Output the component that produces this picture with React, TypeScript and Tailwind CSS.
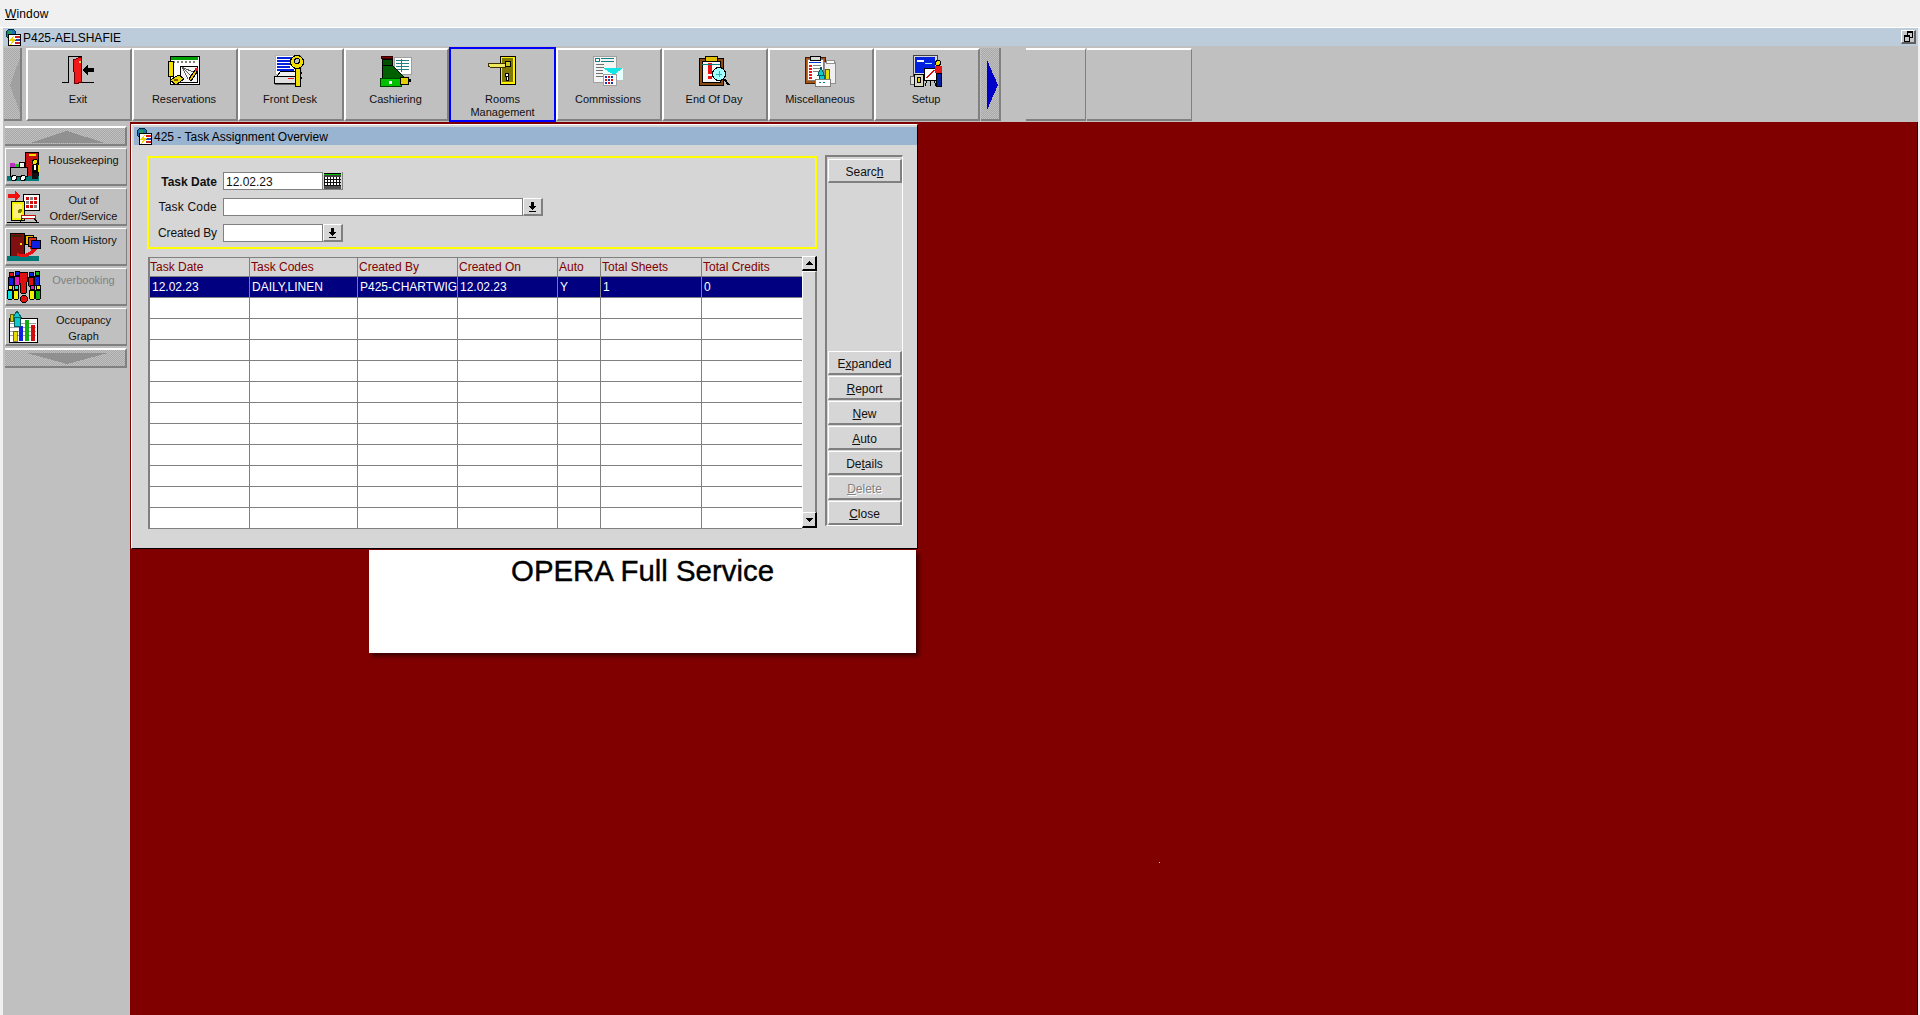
import React from "react";

const Ico = ({ w = 32, h = 32, children }: { w?: number; h?: number; children: React.ReactNode }) => (
  <svg width={w} height={h} viewBox={`0 0 ${w} ${h}`} shapeRendering="crispEdges" className="shrink-0">
    {children}
  </svg>
);

const AppGlobe = () => (
  <Ico w={16} h={17}>
    <circle cx="6" cy="5" r="5" fill="#1c6fb0" stroke="#003040" />
    <rect x="3" y="2" width="4" height="3" fill="#1f9a5a" />
    <rect x="3.5" y="5.5" width="12" height="11" fill="#fff" stroke="#000" />
    <rect x="10" y="7" width="5" height="2" fill="#d02020" />
    <rect x="10" y="10" width="5" height="2" fill="#2040c0" />
    <rect x="10" y="13" width="5" height="2" fill="#d02020" />
    <polygon points="9,6 4,12 7,12 5,16 11,10 8,10" fill="#f0d000" />
  </Ico>
);

const ExitIcon = () => (
  <Ico>
    <path d="M0 27.5H6.5V1.5H20M20 27.5H32" fill="none" stroke="#000" />
    <polygon points="11,5 19,2 20,27 13,29" fill="#f01818" stroke="#600" />
    <rect x="17" y="6" width="2" height="2" fill="#f0e040" />
    <polygon points="20,15 26,10 26,13 32,13 32,17 26,17 26,20" fill="#000" />
  </Ico>
);

const ReservationsIcon = () => (
  <Ico>
    <rect x="2" y="1" width="29" height="28" fill="#fff" stroke="#000" />
    <rect x="3" y="2" width="27" height="3" fill="#00a000" />
    {[5, 9, 13, 17, 21, 25].map((x) => (
      <rect key={x} x={x} y="6" width="2" height="2" fill="#808080" />
    ))}
    <rect x="12" y="11" width="17" height="16" fill="#f4f4f4" stroke="#000" />
    <path d="M14 12L25 23M14 12L20 24M14 12L27 18" stroke="#606060" fill="none" />
    <rect x="0" y="6" width="5" height="15" fill="#f0e000" stroke="#000" />
    <polygon points="2,25 11,20 16,24 8,30" fill="#e8d800" stroke="#000" />
    <rect x="6" y="24" width="4" height="2" fill="#806000" />
    <polygon points="21,24 27,15 29,17 23,26" fill="#f0c000" stroke="#000" />
    <rect x="27" y="13" width="3" height="3" fill="#f01010" />
  </Ico>
);

const FrontDeskIcon = () => (
  <Ico>
    <rect x="1" y="0" width="26" height="19" fill="#fff" stroke="#b0b0b0" />
    {[2, 5, 8, 11, 14].map((y, i) => (
      <rect key={y} x="3" y={y} width={i % 2 ? 13 : 17} height="2" fill="#0020e0" />
    ))}
    <rect x="20" y="2" width="5" height="2" fill="#a0a0a0" />
    <polygon points="3,21 7,16 22,16 24,21" fill="#f0f0f0" stroke="#000" />
    <rect x="0" y="21" width="25" height="7" fill="#e0e0e0" stroke="#000" />
    <rect x="14" y="23" width="6" height="1" fill="#f01010" />
    <rect x="1" y="29" width="24" height="1" fill="#606060" />
    <circle cx="23" cy="7" r="6.5" fill="#f0e000" stroke="#000" />
    <circle cx="23" cy="6" r="2.5" fill="#c0c0c0" stroke="#000" />
    <rect x="21" y="13" width="5" height="18" fill="#f0e000" stroke="#000" />
    <rect x="26" y="17" width="2" height="2" fill="#000" />
    <rect x="26" y="22" width="2" height="2" fill="#000" />
  </Ico>
);

const CashieringIcon = () => (
  <Ico>
    <rect x="1" y="1" width="11" height="2" fill="#800000" stroke="#300" />
    <rect x="2" y="4" width="10" height="7" fill="#005000" stroke="#000" />
    <rect x="14" y="2" width="17" height="17" fill="#fff" stroke="#a0a0a0" />
    {[5, 8, 11, 14].map((y) => (
      <rect key={y} x="16" y={y} width="13" height="1" fill="#208080" />
    ))}
    <rect x="21" y="4" width="1" height="13" fill="#208080" />
    <polygon points="2,10 12,10 23,21 23,24 2,24" fill="#006000" stroke="#000" />
    <rect x="0" y="23" width="21" height="8" fill="#00c000" stroke="#004000" />
    <rect x="9" y="26" width="3" height="3" fill="#fff" />
    <rect x="20" y="22" width="8" height="7" fill="#e0d000" stroke="#000" />
    <rect x="28" y="24" width="3" height="3" fill="#000" />
  </Ico>
);

const RoomsIcon = () => (
  <Ico>
    <rect x="13" y="1" width="15" height="28" fill="#fff000" stroke="#000" />
    <rect x="15" y="3" width="11" height="24" fill="#807800" />
    <rect x="1" y="8" width="20" height="4" rx="2" fill="#f0e860" stroke="#403000" />
    <circle cx="21" cy="9" r="3" fill="#d0c820" stroke="#000" />
    <circle cx="20" cy="20" r="2" fill="#fff" stroke="#000" />
    <rect x="19" y="21" width="2" height="4" fill="#fff" stroke="#000" />
  </Ico>
);

const CommissionsIcon = () => (
  <Ico>
    <rect x="1" y="1" width="23" height="26" fill="#f4f4f4" stroke="#a0a0a0" />
    <rect x="3" y="3" width="4" height="3" fill="#fff" stroke="#108080" />
    <rect x="9" y="3" width="13" height="1" fill="#108080" />
    <rect x="9" y="6" width="13" height="1" fill="#108080" />
    {[9, 12, 15, 18, 21].map((y) => (
      <rect key={y} x="4" y={y} width="8" height="1" fill="#707070" />
    ))}
    <polygon points="11,13 31,13 31,25 11,25" fill="#e8ffff" />
    <polygon points="11,13 31,13 22,20" fill="#10e8e8" />
    <rect x="11" y="19" width="13" height="11" fill="#fff" stroke="#a0a0a0" />
    {[13, 16, 19].map((x) =>
      [21, 24, 27].map((y) => (
        <rect key={`${x}-${y}`} x={x} y={y} width="2" height="2" fill={(x + y) % 2 ? "#e01010" : "#1030d0"} />
      ))
    )}
  </Ico>
);

const EndOfDayIcon = () => (
  <Ico>
    <rect x="1" y="3" width="24" height="27" fill="#8a4a10" stroke="#000" />
    <rect x="4" y="6" width="18" height="21" fill="#f4f4f4" stroke="#000" />
    <rect x="7" y="1" width="12" height="5" fill="#e0c000" stroke="#000" />
    <rect x="10" y="8" width="4" height="11" fill="#f01010" />
    <rect x="10" y="21" width="4" height="3" fill="#f01010" />
    <rect x="4" y="9" width="18" height="1" fill="#008080" />
    <circle cx="21" cy="19" r="6.5" fill="#a0ffff" stroke="#000" />
    <path d="M18 19H24M21 16V22" stroke="#30b0b0" />
    <path d="M26 24L31 30" stroke="#000" strokeWidth="2" />
  </Ico>
);

const MiscIcon = () => (
  <Ico>
    <rect x="1" y="2" width="20" height="26" fill="#a85010" stroke="#402000" />
    <rect x="3" y="4" width="16" height="21" fill="#fff" stroke="#808080" />
    <rect x="6" y="1" width="10" height="4" fill="#d8d8d8" stroke="#000" />
    <rect x="5" y="7" width="12" height="1" fill="#0030d0" />
    {[10, 13, 16, 19, 22].map((y) => (
      <rect key={y} x="5" y={y} width="3" height="2" fill="#f01010" />
    ))}
    {[10, 13, 16].map((y) => (
      <rect key={y} x="9" y={y} width="8" height="1" fill="#808080" />
    ))}
    <rect x="20" y="7" width="11" height="21" fill="#f0f0f0" stroke="#909090" />
    <rect x="22" y="5" width="8" height="3" fill="#fff" stroke="#909090" />
    <polygon points="14,20 17,12 20,20" fill="#10c8d0" stroke="#006060" />
    <rect x="15" y="20" width="5" height="5" fill="#10c8d0" stroke="#006060" />
    <rect x="21" y="14" width="4" height="10" fill="#e0e000" stroke="#606000" />
    <rect x="11" y="24" width="15" height="7" fill="#fff" stroke="#808080" />
    <path d="M15 27H17M19 27H21" stroke="#008080" />
  </Ico>
);

const SetupIcon = () => (
  <Ico>
    <rect x="3" y="0" width="24" height="22" fill="#d8d8d8" stroke="#404040" />
    <rect x="5" y="2" width="20" height="16" fill="#0020e0" />
    <rect x="7" y="5" width="7" height="2" fill="#fff" />
    <rect x="15" y="8" width="7" height="1" fill="#a0e0ff" />
    <rect x="0" y="21" width="4" height="8" fill="#e0e0e0" stroke="#606060" />
    <rect x="4" y="19" width="9" height="12" fill="#d8d8c0" stroke="#000" />
    <rect x="7" y="22" width="3" height="5" fill="#f0d000" stroke="#000" />
    <rect x="14" y="13" width="12" height="12" fill="#fff" stroke="#000" />
    <path d="M17 23L24 15" stroke="#d01010" strokeWidth="1.5" />
    <path d="M17 25L15 31M20 25V31M24 25L26 31" stroke="#000" />
    <circle cx="28" cy="8" r="2.5" fill="#f0e000" stroke="#000" />
    <rect x="25" y="11" width="7" height="7" fill="#e01818" />
    <rect x="26" y="18" width="5" height="13" fill="#0020a0" stroke="#000" />
  </Ico>
);

const HousekeepingIcon = () => (
  <Ico w={34}>
    <rect x="18" y="1" width="13" height="24" fill="#c81010" stroke="#000" />
    <rect x="22" y="3" width="7" height="2" fill="#f0e000" />
    <rect x="0" y="25" width="32" height="5" fill="#007878" />
    <rect x="3" y="16" width="17" height="9" fill="#a8a8a8" stroke="#000" />
    <rect x="3" y="12" width="5" height="4" fill="#c030c0" />
    <rect x="8" y="13" width="4" height="3" fill="#20c020" />
    <rect x="12" y="11" width="5" height="5" fill="#f0f0f0" stroke="#000" />
    <circle cx="7" cy="27" r="2.5" fill="#fff" stroke="#000" />
    <circle cx="16" cy="27" r="2.5" fill="#fff" stroke="#000" />
    <circle cx="28" cy="11" r="2.5" fill="#f0e000" stroke="#000" />
    <rect x="25" y="14" width="6" height="8" fill="#000" />
    <rect x="31" y="14" width="2" height="7" fill="#f0e000" />
    <rect x="27" y="14" width="2" height="5" fill="#fff" />
    <rect x="25" y="22" width="6" height="6" fill="#101010" />
  </Ico>
);

const OutOfOrderIcon = () => (
  <Ico w={34} h={34}>
    <rect x="16" y="4" width="16" height="16" fill="#fff" stroke="#000" />
    {[19, 23, 27].map((x) =>
      [7, 11, 15].map((y) => (
        <rect key={`${x}-${y}`} x={x} y={y} width="3" height="3" fill={(x + y) % 3 ? "#d01010" : "#808080"} />
      ))
    )}
    <polygon points="1,4 8,4 8,1 14,6 8,11 8,8 1,8" fill="#f01010" />
    <rect x="4" y="11" width="13" height="19" fill="#f0f000" stroke="#000" />
    <rect x="6" y="14" width="9" height="14" fill="#fff080" />
    <circle cx="13" cy="21" r="2" fill="#808000" />
    <rect x="14" y="25" width="14" height="3" fill="#fff" stroke="#c01010" />
    <path d="M16 28L13 32M27 28L30 32M0 32.5H32" stroke="#000" fill="none" />
  </Ico>
);

const RoomHistoryIcon = () => (
  <Ico w={34}>
    <rect x="3" y="2" width="14" height="23" fill="#801010" stroke="#000" />
    <rect x="5" y="4" width="10" height="2" fill="#402000" />
    <rect x="13" y="12" width="2" height="2" fill="#f0e000" />
    <rect x="0" y="25" width="32" height="5" fill="#007878" />
    <path d="M10 23Q17 28 26 20" stroke="#e81010" strokeWidth="3" fill="none" />
    <polygon points="23,16 30,18 25,24" fill="#e81010" />
    <rect x="18" y="4" width="8" height="9" fill="#f0c000" stroke="#000" />
    <rect x="21" y="6" width="8" height="9" fill="#e03020" stroke="#000" />
    <rect x="24" y="9" width="9" height="8" fill="#1020e0" stroke="#000" />
  </Ico>
);

const Person = ({ x, y, c, head }: { x: number; y: number; c: string; head: string }) => (
  <g>
    <rect x={x + 1} y={y} width="4" height="4" fill={head} stroke="#000" />
    <polygon points={`${x},${y + 5} ${x + 6},${y + 5} ${x + 5},${y + 14} ${x + 1},${y + 14}`} fill={c} stroke="#000" />
  </g>
);

const OverbookingIcon = () => (
  <Ico w={34} h={34}>
    <Person x={1} y={2} c="#1020e0" head="#e01010" />
    <Person x={7} y={1} c="#e020c0" head="#1020e0" />
    <Person x={21} y={2} c="#e01010" head="#1020e0" />
    <Person x={27} y={1} c="#1020e0" head="#10b010" />
    <Person x={0} y={15} c="#10e0e0" head="#f0f000" />
    <Person x={6} y={15} c="#f0f000" head="#10e0e0" />
    <Person x={22} y={15} c="#f0f000" head="#e020c0" />
    <Person x={28} y={15} c="#10b010" head="#f0f000" />
    <polygon points="12,2 21,2 19,23 14,23" fill="#e01010" stroke="#000" />
    <circle cx="17" cy="29" r="3.5" fill="#e01010" stroke="#000" />
  </Ico>
);

const OccupancyIcon = () => (
  <Ico w={34} h={32}>
    <rect x="2" y="7" width="28" height="24" fill="#fff" stroke="#000" />
    {[12, 16, 20, 24].map((y) => (
      <rect key={y} x="3" y={y} width="26" height="1" fill="#a0a0a0" />
    ))}
    <rect x="6" y="20" width="4" height="10" fill="#e8d800" stroke="#000" strokeWidth="0.5" />
    <rect x="12" y="15" width="4" height="15" fill="#1020e0" />
    <rect x="18" y="9" width="4" height="21" fill="#10b010" />
    <rect x="24" y="14" width="4" height="16" fill="#d01010" />
    <polygon points="10,0 14,6 6,6" fill="#10c8d0" stroke="#006060" />
    <rect x="7" y="6" width="6" height="9" fill="#10c8d0" stroke="#006060" />
    <rect x="3" y="3" width="3" height="7" fill="#d0d000" stroke="#606000" />
  </Ico>
);

const Dither = ({ id }: { id: string }) => (
  <defs>
    <pattern id={id} width="2" height="2" patternUnits="userSpaceOnUse">
      <rect width="2" height="2" fill="#c0c0c0" />
      <rect width="1" height="1" fill="#a8a8a8" />
      <rect x="1" y="1" width="1" height="1" fill="#a8a8a8" />
    </pattern>
  </defs>
);

const toolbarItems = [
  { label: "Exit", icon: <ExitIcon />, width: "w-[106px]" },
  { label: "Reservations", icon: <ReservationsIcon />, width: "w-[106px]" },
  { label: "Front Desk", icon: <FrontDeskIcon />, width: "w-[106px]" },
  { label: "Cashiering", icon: <CashieringIcon />, width: "w-[105px]" },
  { label: "Rooms\nManagement", icon: <RoomsIcon />, width: "w-[107px]", selected: true },
  { label: "Commissions", icon: <CommissionsIcon />, width: "w-[106px]" },
  { label: "End Of Day", icon: <EndOfDayIcon />, width: "w-[106px]" },
  { label: "Miscellaneous", icon: <MiscIcon />, width: "w-[106px]" },
  { label: "Setup", icon: <SetupIcon />, width: "w-[106px]" },
];

const sideItems = [
  { label: "Housekeeping", icon: <HousekeepingIcon /> },
  { label: "Out of\nOrder/Service", icon: <OutOfOrderIcon /> },
  { label: "Room History", icon: <RoomHistoryIcon /> },
  { label: "Overbooking", icon: <OverbookingIcon />, disabled: true },
  { label: "Occupancy\nGraph", icon: <OccupancyIcon /> },
];

const Toolbar = () => (
  <div className="flex h-[76px] items-start bg-[#c0c0c0] pt-[2px] pl-[1px]">
    <div className="h-[73px] w-[18px] border-r-2 border-b-2 border-[#808080]">
      <svg width="16" height="71" shapeRendering="crispEdges">
        <Dither id="ditherLeft" />
        <rect width="16" height="71" fill="url(#ditherLeft)" />
        <polygon points="6,37 16,10 16,65" fill="#a0a0a0" />
      </svg>
    </div>
    <div className="ml-[4px] flex">
      {toolbarItems.map((item) => (
        <div
          key={item.label}
          className={
            item.selected
              ? `${item.width} flex h-[75px] -mt-[1px] flex-col items-center border-2 border-[#0000ff] pt-[6px]`
              : `${item.width} flex h-[73px] flex-col items-center border-t-2 border-l-2 border-r-2 border-b-2 border-t-white border-l-white border-r-[#808080] border-b-[#808080] pt-[5px] pr-[2px]`
          }
        >
          {item.icon}
          <div className="mt-[6px] whitespace-pre-line text-center text-[11px] leading-[13px] text-[#101010]">{item.label}</div>
        </div>
      ))}
    </div>
    <div className="ml-[1px] h-[73px] w-[20px] border-r-2 border-b-2 border-[#808080]">
      <svg width="18" height="71" shapeRendering="crispEdges">
        <Dither id="ditherRight" />
        <rect width="18" height="71" fill="url(#ditherRight)" />
        <polygon points="6,12 17,37 6,62" fill="#0000c8" />
      </svg>
    </div>
    <div className="ml-[25px] h-[73px] w-[60px] border-t-2 border-r border-b-2 border-t-white border-r-[#808080] border-b-[#808080]" />
    <div className="ml-[1px] h-[73px] w-[105px] border-t-2 border-r border-b-2 border-t-white border-r-[#808080] border-b-[#808080]" />
  </div>
);

const Sidebar = () => (
  <div className="flex w-[127px] flex-col bg-[#c0c0c0] pt-[4px] pl-[2px]">
    <div className="h-[20px] w-[122px] border-t-2 border-r-2 border-b-2 border-t-white border-r-[#808080] border-b-[#808080]">
      <svg width="120" height="16" shapeRendering="crispEdges">
        <Dither id="ditherUp" />
        <rect width="120" height="16" fill="url(#ditherUp)" />
        <polygon points="62,3 100,15 25,15" fill="#909090" />
      </svg>
    </div>
    <div className="mt-[2px] flex flex-col gap-[2px]">
      {sideItems.map((item) => (
        <div
          key={item.label}
          className="flex h-[38px] w-[122px] items-center border-t border-r border-b-2 border-l border-t-white border-r-[#808080] border-b-[#808080] border-l-white pl-[1px]"
        >
          {item.icon}
          <div
            className={`flex-1 self-start pt-[3px] text-center whitespace-pre-line text-[11px] leading-[16px] ${
              item.disabled ? "text-[#808080]" : "text-[#101010]"
            }`}
          >
            {item.label}
          </div>
        </div>
      ))}
    </div>
    <div className="mt-[2px] h-[20px] w-[122px] border-t-2 border-r-2 border-b-2 border-t-white border-r-[#808080] border-b-[#808080]">
      <svg width="120" height="16" shapeRendering="crispEdges">
        <Dither id="ditherDown" />
        <rect width="120" height="16" fill="url(#ditherDown)" />
        <polygon points="22,3 103,3 62,14" fill="#909090" />
      </svg>
    </div>
  </div>
);

const DropButton = () => (
  <div className="flex h-[18px] w-[20px] items-center justify-center border-t border-l border-r-2 border-b-2 border-t-white border-l-white border-r-[#808080] border-b-[#808080] bg-[#d6d6d6]">
    <svg width="9" height="10" shapeRendering="crispEdges">
      <rect x="3" y="0" width="3" height="4" fill="#000" />
      <polygon points="0,4 9,4 4.5,8" fill="#000" />
      <rect x="1" y="9" width="7" height="1" fill="#000" />
    </svg>
  </div>
);

const CalendarButton = () => (
  <div className="flex h-[18px] w-[20px] items-center justify-center border-r border-b border-[#808080] bg-[#d6d6d6]">
    <svg width="17" height="16" shapeRendering="crispEdges">
      <rect x="0" y="0" width="17" height="1" fill="#000" />
      <rect x="0" y="1" width="17" height="1" fill="#00c000" />
      <rect x="0" y="2" width="17" height="2" fill="#404040" />
      <rect x="1" y="4" width="15" height="9" fill="#fff" />
      {[1, 4, 7, 10, 13, 16].map((x) => (
        <rect key={x} x={x - 1} y="4" width="1" height="9" fill="#101010" />
      ))}
      {[6, 9, 12].map((y) => (
        <rect key={y} x="0" y={y} width="17" height="1" fill="#101010" />
      ))}
      <rect x="0" y="13" width="17" height="3" fill="#505050" />
    </svg>
  </div>
);

const FilterBox = () => (
  <div className="mt-[1px] flex h-[93px] w-[670px] flex-col gap-[8px] border-2 border-[#ffff00] pt-[14px] text-[12px] text-[#101010]">
    <div className="flex h-[18px] items-center">
      <div className="h-[18px] w-[68px] text-right leading-[20px] font-bold">Task Date</div>
      <div className="ml-[6px] h-[18px] w-[100px] border border-[#808080] bg-white pl-[2px] leading-[18px]">12.02.23</div>
      <CalendarButton />
    </div>
    <div className="flex h-[18px] items-center">
      <div className="w-[68px] whitespace-nowrap text-right tracking-[0.2px]">Task Code</div>
      <div className="ml-[6px] h-[18px] w-[300px] border border-[#808080] bg-white" />
      <DropButton />
    </div>
    <div className="flex h-[18px] items-center">
      <div className="w-[68px] whitespace-nowrap text-right tracking-[-0.1px]">Created By</div>
      <div className="ml-[6px] h-[18px] w-[100px] border border-[#808080] bg-white" />
      <DropButton />
    </div>
  </div>
);

const columns = [
  { title: "Task Date", value: "12.02.23", width: "w-[100px]" },
  { title: "Task Codes", value: "DAILY,LINEN", width: "w-[108px]" },
  { title: "Created By", value: "P425-CHARTWIG", width: "w-[100px]" },
  { title: "Created On", value: "12.02.23", width: "w-[100px]" },
  { title: "Auto", value: "Y", width: "w-[43px]" },
  { title: "Total Sheets", value: "1", width: "w-[101px]" },
  { title: "Total Credits", value: "0", width: "w-[100px]" },
];

const TaskTable = () => (
  <div className="mt-[8px] ml-[1px] flex">
    <div className="w-[654px] border-t border-b border-l-2 border-[#808080] text-[12px]">
      <div className="flex h-[19px] border-b border-[#808080]">
        {columns.map((col) => (
          <div key={col.title} className={`${col.width} border-r border-[#808080] pl-[1px] leading-[18px] text-[#800000] first:pl-0 last:border-r-0`}>
            {col.title}
          </div>
        ))}
      </div>
      <div className="flex h-[21px] border-b border-[#808080] bg-[#000080] text-white">
        {columns.map((col) => (
          <div key={col.title} className={`${col.width} overflow-hidden whitespace-nowrap border-r border-[#808080] pl-[2px] leading-[20px] last:border-r-0`}>
            {col.value}
          </div>
        ))}
      </div>
      {Array.from({ length: 11 }).map((_, i) => (
        <div key={i} className="flex h-[21px] border-b border-[#808080] bg-white last:h-[20px] last:border-b-0">
          {columns.map((col) => (
            <div key={col.title} className={`${col.width} border-r border-[#808080] last:border-r-0`} />
          ))}
        </div>
      ))}
    </div>
    <div className="-mt-[1px] flex h-[272px] w-[15px] flex-col">
      <div className="flex h-[15px] items-center justify-center border-t border-l border-r-2 border-b-2 border-t-white border-l-white border-r-black border-b-black">
        <svg width="7" height="4" shapeRendering="crispEdges"><polygon points="3.5,0 7,4 0,4" fill="#000" /></svg>
      </div>
      <div className="flex-1 border-t border-r-2 border-l border-t-white border-r-[#808080] border-l-white" />
      <div className="flex h-[16px] items-center justify-center border-t border-l border-r-2 border-b-2 border-t-white border-l-white border-r-black border-b-black">
        <svg width="7" height="4" shapeRendering="crispEdges"><polygon points="0,0 7,0 3.5,4" fill="#000" /></svg>
      </div>
    </div>
  </div>
);

const ActionButton = ({ pre, key2, post, disabled }: { pre?: string; key2: string; post?: string; disabled?: boolean }) => (
  <div
    className={`h-[24px] w-[74px] border-t border-l border-r-2 border-b-2 border-t-white border-l-white border-r-[#808080] border-b-[#808080] text-center text-[12px] leading-[24px] ${
      disabled ? "text-[#808080] [text-shadow:1px_1px_0_#fff]" : "text-[#101010]"
    }`}
  >
    {pre}
    <span className="underline underline-offset-1">{key2}</span>
    {post}
  </div>
);

const ButtonPanel = () => (
  <div className="ml-[8px] flex h-[371px] w-[78px] flex-col justify-between border-t-2 border-r border-b border-l-2 border-t-[#808080] border-r-white border-b-white border-l-[#808080] pt-[2px] pl-[1px]">
    <ActionButton pre="Searc" key2="h" />
    <div className="flex flex-col gap-[1px]">
      <ActionButton pre="E" key2="x" post="panded" />
      <ActionButton key2="R" post="eport" />
      <ActionButton key2="N" post="ew" />
      <ActionButton key2="A" post="uto" />
      <ActionButton pre="De" key2="t" post="ails" />
      <ActionButton key2="D" post="elete" disabled />
      <ActionButton key2="C" post="lose" />
    </div>
  </div>
);

export default function App() {
  return (
    <div className="flex h-[1015px] w-[1920px] flex-col overflow-hidden bg-[#f0f0f0] font-['Liberation_Sans',Arial,sans-serif]">
      <div className="h-[28px] border-b border-white pl-[5px] text-[12px] leading-[28px] tracking-[0.15px] text-black">
        <span className="underline underline-offset-1">W</span>indow
      </div>
      <div className="flex flex-1 flex-col pl-[3px] pr-[2px]">
        <div className="flex h-[18px] items-center bg-[#bdccdb] pl-[2px] pr-[2px]">
          <AppGlobe />
          <span className="ml-[2px] pt-[1px] text-[12px] text-black">P425-AELSHAFIE</span>
          <div className="ml-auto flex h-[14px] w-[15px] items-center justify-center border-t border-l border-r-2 border-b-2 border-t-white border-l-white border-r-[#606060] border-b-[#606060] bg-[#c8c8c8]">
            <svg width="9" height="11" shapeRendering="crispEdges">
              <rect x="3" y="0" width="5" height="6" fill="#c8c8c8" stroke="#000" />
              <rect x="3" y="0" width="5" height="2" fill="#000" />
              <rect x="0.5" y="4.5" width="5" height="6" fill="#c8c8c8" stroke="#000" />
              <rect x="0" y="4" width="6" height="2" fill="#000" />
            </svg>
          </div>
        </div>
        <Toolbar />
        <div className="flex flex-1 border-r border-black">
          <Sidebar />
          <div className="relative flex-1 bg-[#800000]">
            <div className="absolute top-[428px] left-[239px] h-[103px] w-[547px] bg-white pt-[4px] text-center text-[29.4px] leading-[33px] text-black shadow-[3px_3px_4px_rgba(0,0,0,0.55)] [-webkit-text-stroke:0.4px_#000]">
              OPERA Full Service
            </div>
            <div className="absolute top-[740px] left-[1029px] h-px w-px bg-[#e0c0c0]" />
            <div className="absolute top-[2px] left-[1px] h-[425px] w-[787px] border-t border-r border-b border-l border-t-white border-r-black border-b-black border-l-white bg-[#d6d6d6] pt-[2px] pl-[2px]">
              <div className="flex h-[18px] items-center bg-[#99b4d1] pl-[2px] text-[12px] text-black">
                <AppGlobe />
                <span className="ml-[2px] pt-[1px]">425 - Task Assignment Overview</span>
              </div>
              <div className="flex pt-[10px] pl-[13px]">
                <div className="flex flex-col">
                  <FilterBox />
                  <TaskTable />
                </div>
                <ButtonPanel />
              </div>
            </div>
          </div>
        </div>
      </div>
    </div>
  );
}
